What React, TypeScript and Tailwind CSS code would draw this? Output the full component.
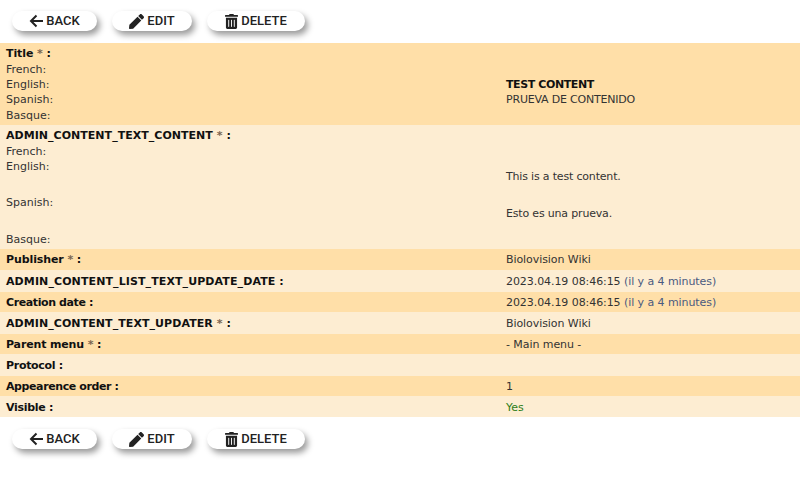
import { FaPen, FaTrashAlt } from "react-icons/fa"

const labelCls = "font-bold text-[#111]"
const btnCls = "flex items-center justify-center rounded-full h-5 bg-white shadow-[3px_4px_6px_rgba(0,0,0,0.4)] font-['Roboto',sans-serif] text-[13px] font-medium text-[#222]"

const ActionBar = () => (
  <div className="flex items-center gap-[15px] pl-3 h-5">
    <button className={`${btnCls} gap-[3px] w-[85px]`}>
      <svg width="14" height="14" viewBox="0 0 14 14" fill="none" stroke="currentColor" strokeWidth="2">
        <path d="M7.5 1.5 2 7l5.5 5.5M2 7h12" />
      </svg>
      BACK
    </button>
    <button className={`${btnCls} gap-[3px] w-20`}>
      <FaPen className="w-[15px] h-[15px]" />EDIT
    </button>
    <button className={`${btnCls} gap-[3px] w-[98px]`}>
      <FaTrashAlt className="w-[13px] h-[15px]" />DELETE
    </button>
  </div>
)

const Req = () => <span className="text-[#7a6650]">*</span>

type RowProps = {
  label: string;
  required?: boolean;
  value?: React.ReactNode;
  height: string;
  dark?: boolean;
  tracking?: string;
};

const Row = ({ label, required, value, height, dark, tracking = "" }: RowProps) => (
  <div className={`flex items-center pl-1.5 ${height} ${dark ? "bg-[#ffdfa8]" : "bg-[#fdedd2]"}`}>
    <div className={`w-[500px] ${labelCls} ${tracking}`}>
      {label} {required && <><Req /> </>}:
    </div>
    <div className="tracking-[-0.07px]">{value}</div>
  </div>
)

const Ago = () => <span className="text-[#4a5a80]">(il y a 4 minutes)</span>

export default function App() {
  return (
    <div className="w-[800px] h-[488px] bg-white pt-[11px] font-['DejaVu_Sans',sans-serif] text-[11px] leading-[15.4px] text-[#333]">
      <ActionBar />
      <div className="mt-3 mb-3">
        <div className="bg-[#ffdfa8] h-[82px] pl-1.5 pt-[3px]">
          <div className={`${labelCls} h-4 tracking-[-0.1px]`}>Title <Req /> :</div>
          <div className="h-[14.8px]">French:</div>
          <div className="flex">
            <div className="w-[500px]">English:</div>
            <div className="font-bold text-[#111] tracking-[-0.4px]">TEST CONTENT</div>
          </div>
          <div className="flex">
            <div className="w-[500px]">Spanish:</div>
            <div className="tracking-[-0.2px]">PRUEVA DE CONTENIDO</div>
          </div>
          <div>Basque:</div>
        </div>
        <div className="bg-[#fdedd2] h-[124px] pl-1.5 pt-[3px]">
          <div className={`${labelCls} h-4 tracking-[0.03px]`}>ADMIN_CONTENT_TEXT_CONTENT <Req /> :</div>
          <div className="h-[14.8px]">French:</div>
          <div className="flex h-[36.5px]">
            <div className="w-[500px]">English:</div>
            <div className="self-center tracking-[-0.18px]">This is a test content.</div>
          </div>
          <div className="flex h-[36.5px]">
            <div className="w-[500px]">Spanish:</div>
            <div className="self-center tracking-[-0.18px]">Esto es una prueva.</div>
          </div>
          <div>Basque:</div>
        </div>
        <Row dark required height="h-[21px]" tracking="tracking-[-0.1px]" label="Publisher" value="Biolovision Wiki" />
        <Row height="h-[22px] pt-0.5" tracking="tracking-[0.1px]" label="ADMIN_CONTENT_LIST_TEXT_UPDATE_DATE" value={<>2023.04.19 08:46:15 <Ago /></>} />
        <Row dark height="h-5 pt-0.5" tracking="tracking-[-0.4px]" label="Creation date" value={<>2023.04.19 08:46:15 <Ago /></>} />
        <Row required height="h-[22px] pt-0.5" tracking="tracking-[0.07px]" label="ADMIN_CONTENT_TEXT_UPDATER" value="Biolovision Wiki" />
        <Row dark required height="h-5 pt-0.5" tracking="tracking-[-0.15px]" label="Parent menu" value="- Main menu -" />
        <Row height="h-[22px] pt-0.5" tracking="tracking-[-0.3px]" label="Protocol" />
        <Row dark height="h-5 pt-0.5" tracking="tracking-[-0.4px]" label="Appearence order" value="1" />
        <Row height="h-[21px] pt-0.5" tracking="tracking-[-0.3px]" label="Visible" value={<span className="text-[#2e7d18]">Yes</span>} />
      </div>
      <ActionBar />
    </div>
  )
}
